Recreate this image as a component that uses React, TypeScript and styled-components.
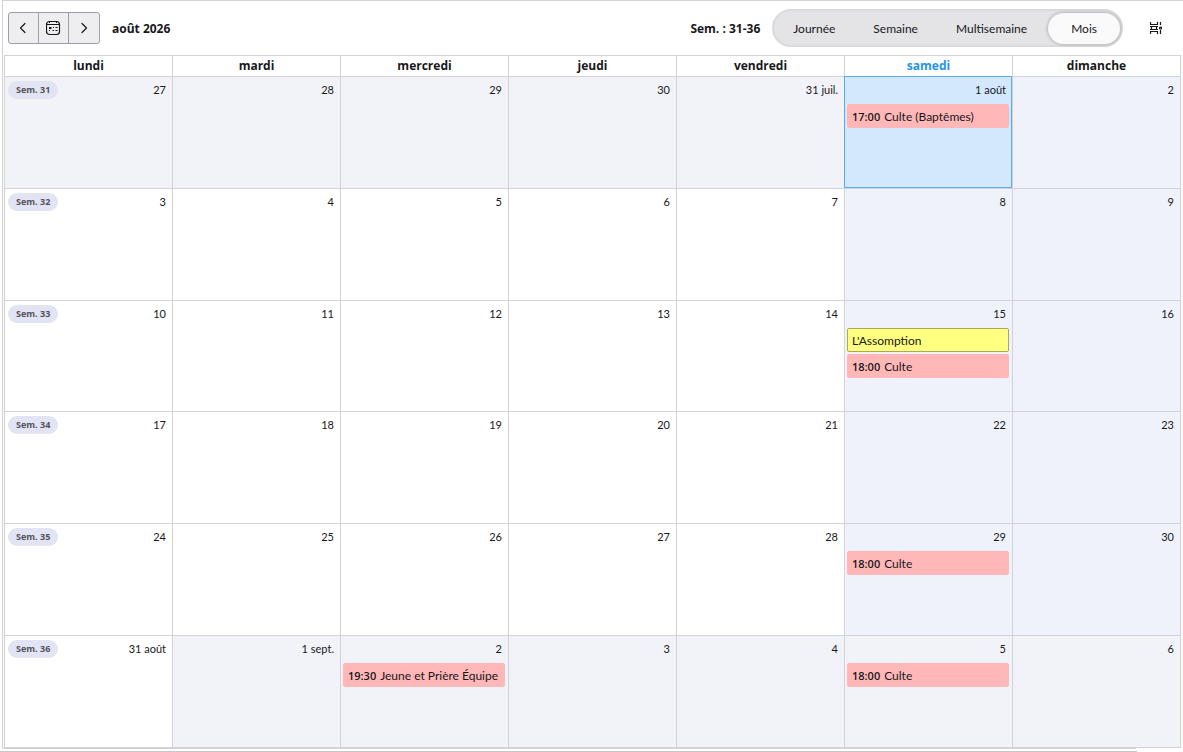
import React from "react";
import styled, { createGlobalStyle, css } from "styled-components";

const boldFamily = `"Open Sans", "Noto Sans", sans-serif`;

const GlobalStyle = createGlobalStyle`
  *, *::before, *::after { box-sizing: border-box; }
  body {
    margin: 0;
    background: #ffffff;
    color: #18181b;
    font: 12px/16px Lato, "Open Sans", sans-serif;
  }
`;

const Page = styled.div`
  display: flex;
  flex-direction: column;
  height: 100vh;
  min-height: 580px;
`;

const Calendar = styled.main`
  flex: 1;
  display: flex;
  flex-direction: column;
  margin-left: 2px;
  border: solid #d2d2d7;
  border-width: 1px 0 0 1px;
`;

const InnerEdge = styled.div`
  height: 3px;
  margin: 0 47px 0 2px;
  border-top: 1px solid #d2d2d7;
`;

const OuterEdge = styled.div`
  margin-right: 46px;
  border-top: 1px solid #c8c8c8;
`;

const Toolbar = styled.header`
  display: flex;
  align-items: center;
  height: 54px;
  padding: 0 15px 0 5px;
`;

const NavGroup = styled.div`
  display: flex;
  border: 1px solid #9f9fa9;
  border-radius: 3px;
  background: #eeeef0;
  overflow: hidden;
`;

const NavButton = styled.button`
  display: grid;
  place-items: center;
  width: 30px;
  height: 30px;
  padding: 0;
  border: 0;
  background: none;
  color: #18181b;

  &:not(:last-child) {
    border-right: 1px solid #9f9fa9;
  }
`;

const Period = styled.h1`
  margin: 0 0 0 12px;
  padding-top: 1px;
  font: 700 12px/16px ${boldFamily};
`;

const Weeks = styled.span`
  margin-left: auto;
  padding-top: 1px;
  font: 700 12px/16px ${boldFamily};
`;

const Views = styled.div`
  display: flex;
  align-items: center;
  height: 38px;
  margin-left: 12px;
  padding-right: 1px;
  border: 2px solid #dadadc;
  border-radius: 19px;
  background: #e4e4e7;
`;

const ViewButton = styled.button<{ $active?: boolean }>`
  height: 31px;
  padding: 1px 19px 0;
  border: 0;
  border-radius: 16px;
  background: none;
  color: inherit;
  font: inherit;

  ${(p) =>
    p.$active &&
    css`
      margin-left: 2px;
      padding: 1px 23px 0;
      background: #fafafa;
      box-shadow: 0 0 3px 1px #b4b4b8;
    `}
`;

const OptionsButton = styled.button`
  display: grid;
  place-items: center;
  width: 24px;
  height: 24px;
  margin-left: 21px;
  padding: 0;
  border: 0;
  background: none;
  color: #18181b;
`;

const GridArea = styled.div`
  flex: 1;
  padding: 0 2px 0 1px;
  background: #fafafb;
`;

const Month = styled.table`
  width: 100%;
  height: 100%;
  table-layout: fixed;
  border-collapse: separate;
  border-spacing: 0;
  border: solid #d2d2d7;
  border-width: 0 1px 1px 0;
`;

const DayName = styled.th<{ $today: boolean }>`
  height: 21px;
  padding: 0;
  border: solid #d2d2d7;
  border-width: 1px 0 0 1px;
  background: #ffffff;
  font: 700 12px/16px ${boldFamily};
  color: ${(p) => (p.$today ? "#2493ef" : "inherit")};
`;

type Tone = "plain" | "other" | "weekend" | "today";

const tones: Record<Tone, string> = {
  plain: "#ffffff",
  other: "#f2f3f8",
  weekend: "#eff2fb",
  today: "#d3e8fd",
};

const DayCell = styled.td<{ $tone: Tone }>`
  height: 84px;
  padding: 4px 3px 0 2px;
  border: solid #d2d2d7;
  border-width: 1px 0 0 1px;
  vertical-align: top;
  background: ${(p) => tones[p.$tone]};

  ${(p) =>
    p.$tone === "today" &&
    css`
      border-color: #58acef;
      box-shadow: inset -1px -1px 0 #58acef;
    `}
`;

const DayHead = styled.div`
  display: flex;
  align-items: center;
  height: 18px;
  margin-bottom: 5px;
  padding: 0 3px 0 1px;
  font-size: 11px;
`;

const WeekBadge = styled.span`
  padding: 0 8px;
  border-radius: 9px;
  background: #e2e4f3;
  color: #52525b;
  font: 700 9px/18px ${boldFamily};
`;

const DayNumber = styled.span`
  margin-left: auto;
`;

const Event = styled.div<{ $holiday?: boolean }>`
  height: 24px;
  margin-bottom: 2px;
  padding: 1px 4px 0;
  border: 1px solid ${(p) => (p.$holiday ? "#a9a95c" : "#ffb7b7")};
  border-radius: 2px;
  background: ${(p) => (p.$holiday ? "#ffff80" : "#ffb7b7")};
  line-height: 22px;
  white-space: nowrap;
  overflow: hidden;
`;

const Time = styled.time`
  margin-right: 4px;
  font-family: ${boldFamily};
  font-size: 11px;
  font-weight: 600;
`;

interface Entry {
  time?: string;
  title: string;
}

interface Day {
  label: string;
  tone: Tone;
  entries?: Entry[];
}

const dayNames = ["lundi", "mardi", "mercredi", "jeudi", "vendredi", "samedi", "dimanche"];
const views = ["Journée", "Semaine", "Multisemaine", "Mois"];
const culte: Entry = { time: "18:00", title: "Culte" };

const labels = [
  ["27", "28", "29", "30", "31 juil.", "1 août", "2"],
  ["3", "4", "5", "6", "7", "8", "9"],
  ["10", "11", "12", "13", "14", "15", "16"],
  ["17", "18", "19", "20", "21", "22", "23"],
  ["24", "25", "26", "27", "28", "29", "30"],
  ["31 août", "1 sept.", "2", "3", "4", "5", "6"],
];

const entries: Record<string, Entry[]> = {
  "0-5": [{ time: "17:00", title: "Culte (Baptêmes)" }],
  "2-5": [{ title: "L'Assomption" }, culte],
  "4-5": [culte],
  "5-2": [{ time: "19:30", title: "Jeune et Prière Équipe" }],
  "5-5": [culte],
};

function toneOf(week: number, day: number): Tone {
  if (week === 0 && day === 5) return "today";
  if ((week === 0 && day < 5) || (week === 5 && day > 0)) return "other";
  return day > 4 ? "weekend" : "plain";
}

const weeks: Day[][] = labels.map((row, w) =>
  row.map((label, d) => ({ label, tone: toneOf(w, d), entries: entries[`${w}-${d}`] })),
);

const Chevron = ({ d }: { d: string }) => (
  <svg width="15" height="16" viewBox="1 0 15 16" fill="none" stroke="currentColor" strokeWidth="1.2" strokeLinecap="round" strokeLinejoin="round" aria-hidden="true">
    <path d={d} />
  </svg>
);

const TodayIcon = () => (
  <svg width="15" height="16" viewBox="1 0 15 16" fill="none" stroke="currentColor" aria-hidden="true">
    <rect x="1.5" y="1.5" width="13" height="13" rx="3" strokeWidth="1.2" />
    <path d="M1.500 4.500h13M4.500 1.500v1.500M11.500 1.500v1.500" />
    <path d="M8 7.500h1M10.500 7.500h2M7.500 10.500h1.500M10.500 10.500h2M4 10.500h1" />
    <rect x="4.500" y="7.500" width="1.500" height="1" />
  </svg>
);

const OptionsIcon = () => (
  <svg width="12" height="12" viewBox="0 0 12 12" fill="none" stroke="currentColor" strokeWidth="1.2" aria-hidden="true">
    <path d="M.5 0v2.500h7V0M.5 12V9.500h7V12" />
    <path d="M0 4.500h8M0 7.500h8M1.500 4.500v3M6.500 4.500v3" />
    <path d="M10.500 0v3M10.500 8v4" />
    <circle cx="10.500" cy="6" r="1" />
  </svg>
);

export default function App() {
  return (
    <Page>
      <GlobalStyle />
      <Calendar>
        <Toolbar>
          <NavGroup>
            <NavButton aria-label="Précédent">
              <Chevron d="M10 3.500 5.500 8l4.500 4.500" />
            </NavButton>
            <NavButton aria-label="Aujourd'hui">
              <TodayIcon />
            </NavButton>
            <NavButton aria-label="Suivant">
              <Chevron d="M6 3.500 10.500 8 6 12.500" />
            </NavButton>
          </NavGroup>
          <Period>août 2026</Period>
          <Weeks>Sem. : 31-36</Weeks>
          <Views>
            {views.map((view) => (
              <ViewButton key={view} $active={view === "Mois"} aria-pressed={view === "Mois"}>
                {view}
              </ViewButton>
            ))}
          </Views>
          <OptionsButton aria-label="Options">
            <OptionsIcon />
          </OptionsButton>
        </Toolbar>
        <GridArea>
          <Month>
            <thead>
              <tr>
                {dayNames.map((name) => (
                  <DayName key={name} scope="col" $today={name === "samedi"}>
                    {name}
                  </DayName>
                ))}
              </tr>
            </thead>
            <tbody>
              {weeks.map((days, w) => (
                <tr key={w}>
                  {days.map((day, d) => (
                    <DayCell key={d} $tone={day.tone}>
                      <DayHead>
                        {d === 0 && <WeekBadge>Sem. {31 + w}</WeekBadge>}
                        <DayNumber>{day.label}</DayNumber>
                      </DayHead>
                      {day.entries?.map((entry) => (
                        <Event key={entry.title} $holiday={!entry.time}>
                          {entry.time && <Time>{entry.time}</Time>}
                          {entry.title}
                        </Event>
                      ))}
                    </DayCell>
                  ))}
                </tr>
              ))}
            </tbody>
          </Month>
        </GridArea>
      </Calendar>
      <InnerEdge />
      <OuterEdge />
    </Page>
  );
}
